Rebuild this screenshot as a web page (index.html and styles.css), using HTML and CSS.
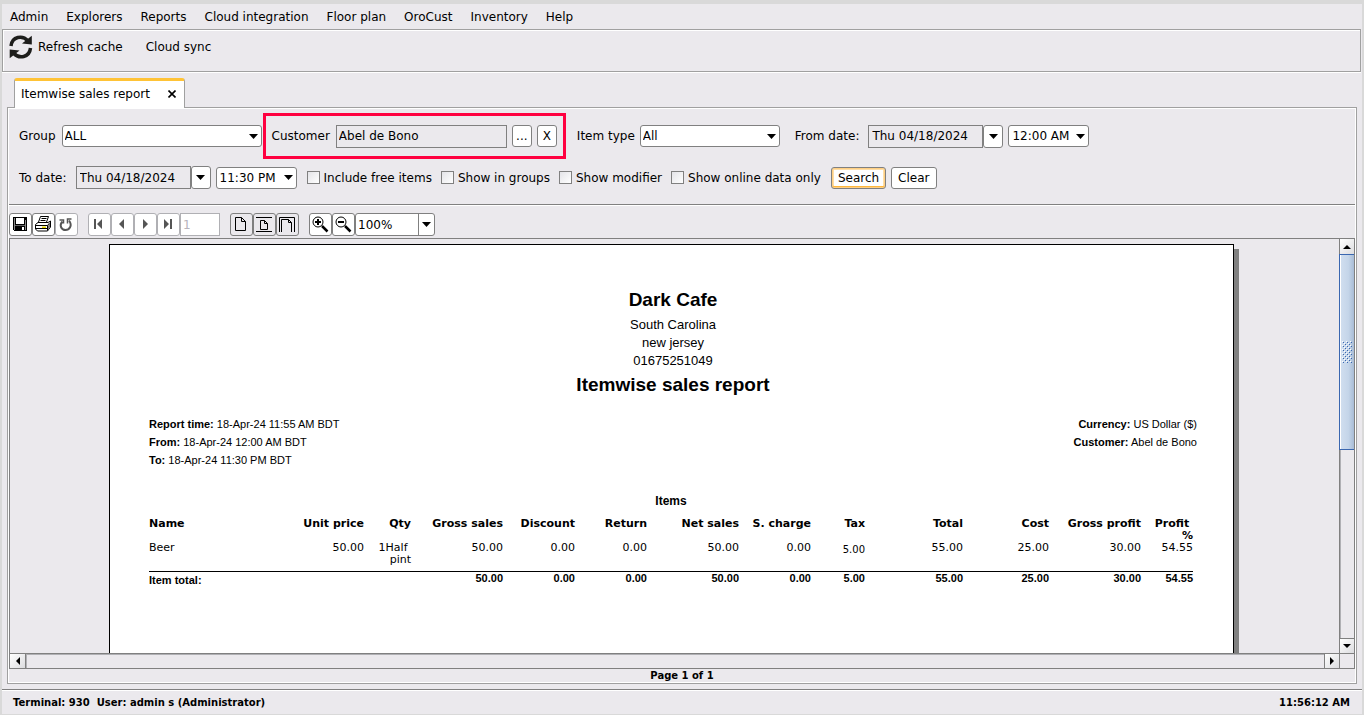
FILE: index.html
```html
<!DOCTYPE html>
<html lang="en">
<head>
    <meta charset="UTF-8">
    <meta name="viewport" content="width=device-width, initial-scale=1.0">
    <title>Itemwise sales report</title>
    <link rel="stylesheet" href="styles.css">
</head>
<body>
    <div class="window">
        <nav class="menubar">
            <a href="#">Admin</a>
            <a href="#">Explorers</a>
            <a href="#">Reports</a>
            <a href="#">Cloud integration</a>
            <a href="#">Floor plan</a>
            <a href="#">OroCust</a>
            <a href="#">Inventory</a>
            <a href="#">Help</a>
        </nav>

        <div class="toolbar">
            <button class="tool-btn">
                <svg width="24" height="24" viewBox="0 0 24 24" fill="none" stroke="#1d1d1b" stroke-width="3.500">
                    <path d="M2 11C3 1.500 13.500-.5 19 6"/>
                    <path d="M21.500 13C20.500 22.500 10 24.500 4.500 18"/>
                    <path d="M22.800.8v8.700l-9.800-1z" fill="#1d1d1b" stroke="none"/>
                    <path d="M.7 23.200v-8.700l9.800 1z" fill="#1d1d1b" stroke="none"/>
                </svg>
                Refresh cache
            </button>
            <button class="tool-btn">Cloud sync</button>
        </div>

        <div class="tabs">
            <div class="tab">
                Itemwise sales report
                <button class="tab-close" aria-label="Close tab">
                    <svg width="8" height="8" viewBox="0 0 8 8" stroke="#000" stroke-width="1.600"><path d="M.5.500l7 7M7.500.500l-7 7"/></svg>
                </button>
            </div>
        </div>

        <main class="panel">
            <form class="filters">
                <div class="filter-row">
                    <label for="group" class="name-label">Group</label>
                    <select id="group" class="combo combo-group"><option>ALL</option></select>
                    <div class="customer-box">
                        <label for="customer" class="name-label">Customer</label>
                        <input id="customer" class="field field-customer" type="text" value="Abel de Bono" readonly>
                        <button type="button" class="btn btn-small">...</button>
                        <button type="button" class="btn btn-small">X</button>
                    </div>
                    <label for="item-type" class="after-box">Item type</label>
                    <select id="item-type" class="combo combo-type"><option>All</option></select>
                    <label for="from-date" class="date-label from-label">From date:</label>
                    <div class="date">
                        <input id="from-date" class="field field-date" type="text" value="Thu 04/18/2024" readonly>
                        <button type="button" class="btn btn-drop" aria-label="Pick from date"></button>
                    </div>
                    <select class="combo combo-time" aria-label="From time"><option>12:00 AM</option></select>
                </div>
                <div class="filter-row">
                    <label for="to-date" class="date-label">To date:</label>
                    <div class="date">
                        <input id="to-date" class="field field-date" type="text" value="Thu 04/18/2024" readonly>
                        <button type="button" class="btn btn-drop" aria-label="Pick to date"></button>
                    </div>
                    <select class="combo combo-time" aria-label="To time"><option>11:30 PM</option></select>
                    <div class="checks">
                        <label class="check"><input type="checkbox">Include free items</label>
                        <label class="check"><input type="checkbox">Show in groups</label>
                        <label class="check"><input type="checkbox">Show modifier</label>
                        <label class="check"><input type="checkbox">Show online data only</label>
                    </div>
                    <button type="button" class="btn btn-default">Search</button>
                    <button type="button" class="btn">Clear</button>
                </div>
            </form>

            <div class="viewer-bar">
                <div class="group">
                    <button class="icon-btn" aria-label="Save">
                        <svg width="16" height="16" viewBox="0 0 16 16" shape-rendering="crispEdges">
                            <path d="M1 1h14v14H2l-1-1z" fill="#000"/>
                            <path d="M4 2h8v6H4z" fill="#fff"/>
                            <path d="M2 2h1v12H2zM13 4h1v10h-1z" fill="#888"/>
                            <path d="M10 11h2v3h-2z" fill="#fff"/>
                            <path d="M3 9h10v1H3z" fill="#666"/>
                        </svg>
                    </button>
                    <button class="icon-btn" aria-label="Print">
                        <svg width="16" height="16" viewBox="0 0 16 16">
                            <path d="M5.500.5h8l-2.500 7H3z" fill="#fff" stroke="#000"/>
                            <path d="M6.500 2.500h5M5.500 4.500h5" stroke="#000"/>
                            <path d="M.5 8.500L3 6.500h10l2.500-1.500v6l-3 4h-10l-2-2z" fill="#fff" stroke="#000"/>
                            <path d="M1 9.500h11.500l2.500-3M1 12.500h11M12.500 9.500v5" stroke="#000" fill="none"/>
                            <path d="M13 9.500l2-2.500v4l-2 3z" fill="#777"/>
                            <path d="M7 10.500h4v1.500H7z" fill="#e8d800"/>
                        </svg>
                    </button>
                    <button class="icon-btn dim" aria-label="Reload">
                        <svg width="16" height="16" viewBox="0 0 16 16" fill="none" stroke="#555" stroke-width="2">
                            <path d="M4.500 5.500C.5 10 4 14 7.500 14S15 10 11 4.500"/>
                            <path d="M1.500 4h4v3.500" stroke-width="1.500"/>
                            <path d="M9.500 7.500V3h4" stroke-width="1.500"/>
                        </svg>
                    </button>
                </div>
                <div class="group">
                    <button class="icon-btn dim" aria-label="First page">
                        <svg width="16" height="16" viewBox="0 0 16 16" fill="#555"><path d="M3 3h2v10H3zM11 3v10L6 8z"/></svg>
                    </button>
                    <button class="icon-btn dim" aria-label="Previous page">
                        <svg width="16" height="16" viewBox="0 0 16 16" fill="#555"><path d="M10 3v10L5 8z"/></svg>
                    </button>
                    <button class="icon-btn dim" aria-label="Next page">
                        <svg width="16" height="16" viewBox="0 0 16 16" fill="#555"><path d="M6 3v10l5-5z"/></svg>
                    </button>
                    <button class="icon-btn dim" aria-label="Last page">
                        <svg width="16" height="16" viewBox="0 0 16 16" fill="#555"><path d="M4 3v10l5-5zM10 3h2v10h-2z"/></svg>
                    </button>
                    <input class="page-input" type="text" value="1" aria-label="Page" disabled>
                </div>
                <div class="group">
                    <button class="icon-btn pressed" aria-label="Actual size">
                        <svg width="18" height="18" viewBox="0 0 18 18" fill="none" stroke="#000"><path d="M3.500 2.500h6l4 4v9h-10zM9.500 2.500v4h4"/></svg>
                    </button>
                    <button class="icon-btn pressed" aria-label="Fit page">
                        <svg width="18" height="18" viewBox="0 0 18 18" fill="none" stroke="#000"><path d="M1 2.500h16M1 16.500h16M5.500 5.500h4l3 3v6h-7zM9.500 5.500v3h3"/></svg>
                    </button>
                    <button class="icon-btn pressed" aria-label="Fit width">
                        <svg width="18" height="18" viewBox="0 0 18 18" fill="none" stroke="#000"><path d="M1.500 17V2.500h15V17M3.500 17V4.500h7l3 3V17M10.500 4.500v3h3"/></svg>
                    </button>
                </div>
                <div class="group">
                    <button class="icon-btn" aria-label="Zoom in">
                        <svg width="18" height="18" viewBox="0 0 18 18" fill="none" stroke="#000">
                            <circle cx="7" cy="7" r="5"/>
                            <path d="M4 7h6M7 4v6" stroke-width="2"/>
                            <path d="M11 11l5.500 5.500" stroke-width="2.500"/>
                        </svg>
                    </button>
                    <button class="icon-btn" aria-label="Zoom out">
                        <svg width="18" height="18" viewBox="0 0 18 18" fill="none" stroke="#000">
                            <circle cx="7" cy="7" r="5"/>
                            <path d="M4 7h6" stroke-width="2"/>
                            <path d="M11 11l5.500 5.500" stroke-width="2.500"/>
                        </svg>
                    </button>
                    <select class="combo combo-zoom" aria-label="Zoom"><option>100%</option></select>
                </div>
            </div>

            <div class="viewer">
                <div class="canvas">
                    <article class="page">
                        <h1>Dark Cafe</h1>
                        <p class="address">South Carolina<br>new jersey<br>01675251049</p>
                        <h2>Itemwise sales report</h2>

                        <div class="meta">
                            <div>
                                <p><b>Report time:</b> 18-Apr-24 11:55 AM BDT</p>
                                <p><b>From:</b> 18-Apr-24 12:00 AM BDT</p>
                                <p><b>To:</b> 18-Apr-24 11:30 PM BDT</p>
                            </div>
                            <div class="meta-right">
                                <p><b>Currency:</b> US Dollar ($)</p>
                                <p><b>Customer:</b> Abel de Bono</p>
                            </div>
                        </div>

                        <table class="items">
                            <caption>Items</caption>
                            <colgroup>
                                <col class="c-name"><col class="c-price"><col class="c-qty"><col class="c-gross"><col class="c-money"><col class="c-money"><col class="c-gross">
                                <col class="c-money"><col class="c-tax"><col class="c-total"><col class="c-cost"><col class="c-gross"><col class="c-profit">
                            </colgroup>
                            <thead>
                                <tr>
                                    <th class="name">Name</th>
                                    <th>Unit price</th>
                                    <th>Qty</th>
                                    <th>Gross sales</th>
                                    <th>Discount</th>
                                    <th>Return</th>
                                    <th>Net sales</th>
                                    <th>S. charge</th>
                                    <th>Tax</th>
                                    <th>Total</th>
                                    <th>Cost</th>
                                    <th>Gross profit</th>
                                    <th>Profit&nbsp;<br>%</th>
                                </tr>
                            </thead>
                            <tbody>
                                <tr>
                                    <td class="name">Beer</td>
                                    <td>50.00</td>
                                    <td>1Half&nbsp;<br>pint</td>
                                    <td>50.00</td>
                                    <td>0.00</td>
                                    <td>0.00</td>
                                    <td>50.00</td>
                                    <td>0.00</td>
                                    <td class="tax">5.00</td>
                                    <td>55.00</td>
                                    <td>25.00</td>
                                    <td>30.00</td>
                                    <td>54.55</td>
                                </tr>
                            </tbody>
                            <tfoot>
                                <tr>
                                    <td class="name total-label">Item total:</td>
                                    <td></td>
                                    <td></td>
                                    <td>50.00</td>
                                    <td>0.00</td>
                                    <td>0.00</td>
                                    <td>50.00</td>
                                    <td>0.00</td>
                                    <td>5.00</td>
                                    <td>55.00</td>
                                    <td>25.00</td>
                                    <td>30.00</td>
                                    <td>54.55</td>
                                </tr>
                            </tfoot>
                        </table>
                    </article>
                </div>
                <div class="vscroll">
                    <button class="scroll-btn" aria-label="Scroll up"><svg width="8" height="4" viewBox="0 0 8 4"><path d="M0 4l4-4 4 4z"/></svg></button>
                    <div class="track">
                        <div class="thumb">
                            <svg width="10" height="22">
                                <defs>
                                    <pattern id="grip" width="4" height="4" patternUnits="userSpaceOnUse">
                                        <path d="M0 0h1v1H0zM2 2h1v1H2z" fill="#fff"/>
                                        <path d="M1 1h1v1H1zM3 3h1v1H3z" fill="#3a67b0"/>
                                    </pattern>
                                </defs>
                                <rect width="10" height="22" fill="url(#grip)"/>
                            </svg>
                        </div>
                    </div>
                    <button class="scroll-btn" aria-label="Scroll down"><svg width="8" height="4" viewBox="0 0 8 4"><path d="M0 0l4 4 4-4z"/></svg></button>
                </div>
                <div class="hscroll">
                    <button class="scroll-btn" aria-label="Scroll left"><svg width="4" height="8" viewBox="0 0 4 8"><path d="M4 0L0 4l4 4z"/></svg></button>
                    <div class="track"></div>
                    <button class="scroll-btn" aria-label="Scroll right"><svg width="4" height="8" viewBox="0 0 4 8"><path d="M0 0l4 4-4 4z"/></svg></button>
                </div>
                <div class="corner"></div>
            </div>
            <div class="page-count">Page 1 of 1</div>
        </main>

        <footer class="status">
            <span>Terminal: 930&nbsp; User: admin s (Administrator)</span>
            <span>11:56:12 AM</span>
        </footer>
    </div>
</body>
</html>
```
FILE: styles.css
```css
* {
    margin: 0;
    padding: 0;
    box-sizing: border-box;
}

body {
    height: 100vh;
    padding: 4px 2px 1px;
    background: #d9d9d9;
    font-family: "DejaVu Sans", sans-serif;
    font-size: 12px;
    color: #000;
}

button, input, select {
    font: inherit;
    color: inherit;
}

svg {
    display: block;
    flex: none;
}

.window {
    height: 100%;
    display: flex;
    flex-direction: column;
    background: #ebe9ed;
}

.menubar {
    display: flex;
    gap: 18px;
    height: 25px;
    align-items: center;
    padding: 0 8px;
}

.menubar a {
    color: inherit;
    text-decoration: none;
}

.toolbar {
    display: flex;
    gap: 23px;
    height: 43px;
    padding: 5px 6px;
    margin-right: 1px;
    border: 1px solid #a0a0a0;
    box-shadow: inset 1px 1px #fff, 0 1px #fff;
}

.tool-btn {
    display: flex;
    align-items: center;
    gap: 5px;
    height: 24px;
    border: none;
    background: none;
}

.tabs {
    display: flex;
    padding: 6px 12px 0;
}

.tab {
    display: flex;
    align-items: center;
    gap: 18px;
    height: 30px;
    margin-bottom: -1px;
    padding: 0 8px 2px 6px;
    position: relative;
    background: #fff;
    border: 1px solid #a0a0a0;
    border-top: 3px solid #ffc336;
    border-bottom: none;
    border-radius: 3px 3px 0 0;
}

.tab-close {
    border: none;
    background: none;
}

.panel {
    flex: 1;
    min-height: 0;
    display: flex;
    flex-direction: column;
    margin: 0 5px 5px;
    border: 1px solid #a0a0a0;
    box-shadow: inset 0 0 0 1px #fff;
    padding: 0 1px;
}

.filters {
    padding: 5px 10px 15px;
    border-bottom: 1px solid #808080;
    box-shadow: 0 1px #fff;
}

.filter-row {
    display: flex;
    align-items: center;
    gap: 5px;
}

.filter-row + .filter-row {
    margin-top: 7px;
}

.name-label {
    padding-right: 1px;
}

.date-label {
    padding-right: 4px;
}

.combo {
    height: 22px;
    padding: 0 2px;
    appearance: none;
    border: 1px solid #808080;
    border-radius: 3px;
    background: #fff url("data:image/svg+xml,%3Csvg xmlns='http://www.w3.org/2000/svg' width='9' height='5'%3E%3Cpath d='M0 0h9L4.500 5z'/%3E%3C/svg%3E") no-repeat right 3px center;
}

.combo-group {
    width: 200px;
}

.combo-type {
    width: 140px;
}

.combo-time {
    width: 81px;
    padding-left: 3px;
}

.field {
    height: 23px;
    padding: 0 2px;
    border: 1px solid #808080;
    background: #ebe9ed;
}

.field-customer {
    width: 171px;
}

.field-date {
    width: 115px;
    padding-left: 3px;
}

.btn {
    height: 22px;
    padding: 0 6px;
    border: 1px solid #808080;
    border-radius: 3px;
    background: #fff;
}

.btn-small {
    width: 20px;
    padding: 0;
}

.btn-drop {
    width: 20px;
    height: 23px;
    background: #fff url("data:image/svg+xml,%3Csvg xmlns='http://www.w3.org/2000/svg' width='9' height='5'%3E%3Cpath d='M0 0h9L4.500 5z'/%3E%3C/svg%3E") no-repeat center;
}

.btn-default {
    box-shadow: inset 0 0 0 1px #ffcf83, inset 0 -2px #ffb83c, inset 0 0 0 2px #ffdfa8;
}

.customer-box {
    display: flex;
    align-items: center;
    gap: 5px;
    height: 46px;
    margin-left: -4px;
    padding: 0 6px;
    border: 3px solid #ff0040;
}

.after-box {
    margin-left: 6px;
}

.from-label {
    margin-left: 10px;
}

.date {
    display: flex;
}

.checks {
    display: flex;
    gap: 9px;
    margin: 0 5px;
}

.check {
    display: flex;
    align-items: center;
    gap: 4px;
}

.check input {
    width: 13px;
    height: 13px;
    appearance: none;
    border: 1px solid #808080;
    background: linear-gradient(135deg, #e4e4e8, #fff);
}

.check input:checked {
    background: #ffc336;
}

.viewer-bar {
    display: flex;
    gap: 10px;
    padding: 8px 0 2px;
}

.group {
    display: flex;
}

.icon-btn {
    display: flex;
    align-items: center;
    justify-content: center;
    width: 23px;
    height: 23px;
    padding: 0 1px 1px 0;
    border: 1px solid #808080;
    border-radius: 3px;
    background: #fff;
}

.dim {
    border-color: #b0b0b4;
}

.pressed {
    background: #ebe9ed;
}

.page-input {
    width: 40px;
    height: 23px;
    padding: 0 2px;
    border: 1px solid #b0b0b4;
    background: #fff;
    color: #b8b4bc;
}

.combo-zoom {
    width: 80px;
    height: 23px;
    background-image: url("data:image/svg+xml,%3Csvg xmlns='http://www.w3.org/2000/svg' width='13' height='23'%3E%3Cpath d='M0 0h1v23H0z' fill='%23808080'/%3E%3Cpath d='M4 9h9l-4.500 5z'/%3E%3C/svg%3E");
}

.viewer {
    flex: 1;
    min-height: 0;
    display: grid;
    grid-template-columns: 1fr 15px;
    grid-template-rows: 1fr 15px;
    border: 1px solid #808080;
}

.canvas {
    display: flex;
    justify-content: center;
    align-items: flex-start;
    min-height: 0;
    padding: 5px 6px 0 0;
    overflow: hidden;
}

.page {
    width: 100%;
    max-width: 1125px;
    min-height: 796px;
    padding: 43px 36px 0 39px;
    border: 1px solid #000;
    background: #fff;
    box-shadow: 5px 5px #808080;
    font-family: "Liberation Sans", sans-serif;
    font-size: 11px;
}

.page h1, .page h2 {
    font-size: 19px;
    line-height: 24px;
    text-align: center;
}

.address {
    padding: 4px 0 3px;
    font-size: 13px;
    line-height: 18px;
    text-align: center;
}

.meta {
    display: flex;
    justify-content: space-between;
    margin: 18px 0 23px;
    line-height: 18px;
}

.meta-right {
    text-align: right;
}

.items {
    width: 1044px;
    table-layout: fixed;
    border-collapse: collapse;
    font-family: "DejaVu Sans", sans-serif;
    font-size: 11px;
    line-height: 12px;
    text-align: right;
}

.items caption {
    padding: 0 0 8px;
    font: bold 12px/18px "Liberation Sans", sans-serif;
    text-align: center;
}

.items th, .items td {
    vertical-align: top;
    white-space: nowrap;
}

.items .name {
    text-align: left;
}

.items tbody td {
    padding-bottom: 5px;
}

.items tbody .tax {
    padding-top: 2px;
    font-size: 10px;
}

.items tfoot {
    border-top: 1px solid #000;
    font: bold 11px/12px "Liberation Sans", sans-serif;
}

.items tfoot .total-label {
    padding-top: 2px;
}

.c-name {
    width: 143px;
}

.c-price, .c-money {
    width: 72px;
}

.c-qty {
    width: 47px;
}

.c-gross {
    width: 92px;
}

.c-tax {
    width: 54px;
}

.c-total {
    width: 98px;
}

.c-cost {
    width: 86px;
}

.c-profit {
    width: 52px;
}

.vscroll {
    display: flex;
    flex-direction: column;
    border-left: 1px solid #808080;
}

.hscroll {
    display: flex;
    border-top: 1px solid #808080;
}

.track {
    flex: 1;
    box-shadow: inset 1px 1px #b0b0b4;
}

.scroll-btn {
    display: flex;
    align-items: center;
    justify-content: center;
    flex: 0 0 15px;
    border: none;
    background: linear-gradient(135deg, #fff, #dcdcdf);
}

.vscroll .scroll-btn:last-child {
    border-top: 1px solid #808080;
}

.hscroll .scroll-btn:first-child {
    flex-basis: 16px;
    border-right: 1px solid #808080;
}

.hscroll .scroll-btn:last-child {
    border-left: 1px solid #808080;
}

.thumb {
    display: flex;
    align-items: center;
    justify-content: center;
    height: 51%;
    border: 1px solid #3a67b0;
    border-width: 1px 0;
    margin-left: -1px;
    border-left-width: 1px;
    background: linear-gradient(90deg, #fff 1px, #d0deef 1px, #c4d5e9 60%, #a9bcd6);
}

.corner {
    border-top: 1px solid #808080;
    border-left: 1px solid #808080;
}

.page-count {
    height: 14px;
    line-height: 14px;
    font-size: 10px;
    font-weight: bold;
    text-align: center;
}

.status {
    display: flex;
    justify-content: space-between;
    align-items: center;
    height: 25px;
    padding: 0 12px 0 11px;
    border-top: 1px solid #808080;
    box-shadow: inset 0 1px #fff;
    font-size: 10px;
    font-weight: bold;
}
```
